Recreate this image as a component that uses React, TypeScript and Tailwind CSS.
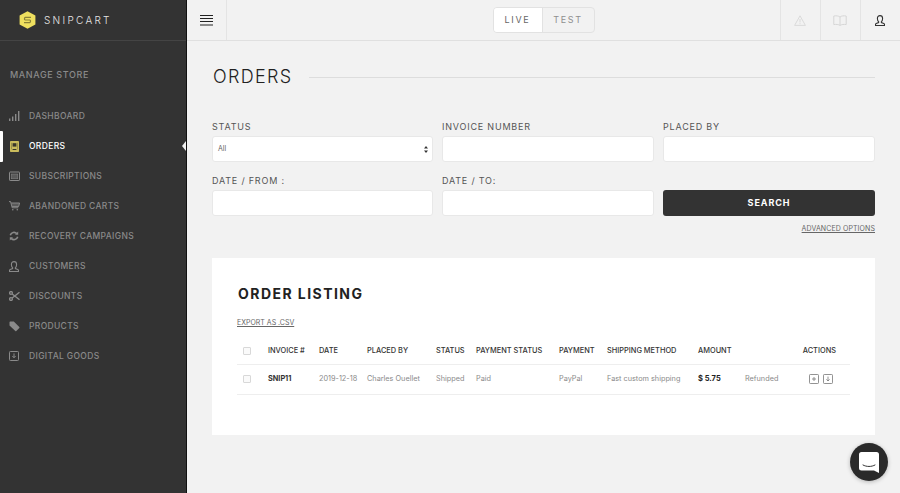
import React from "react";

const font = { fontFamily: '"Inter", "Liberation Sans", sans-serif' };

function Dash() {
  return (
    <svg width="11" height="10" viewBox="0 0 11 10" fill="currentColor">
      <rect x="0" y="7.5" width="1.4" height="2.5" />
      <rect x="3" y="5.5" width="1.4" height="4.5" />
      <rect x="6" y="3" width="1.4" height="7" />
      <rect x="9" y="0" width="1.4" height="10" />
    </svg>
  );
}
function OrdersIcon() {
  return (
    <svg width="9" height="11" viewBox="0 0 9 11" className="ml-[1px]">
      <rect x="0" y="0" width="9" height="11" rx="0.8" fill="#c9bb5c" />
      <path d="M1.5 1.8v6.5M7.5 1.8v6.5" stroke="#7e7740" strokeWidth="0.6" />
      <rect x="2.6" y="2.2" width="3.8" height="3.4" fill="#38362a" />
      <rect x="2.6" y="8" width="3.8" height="1" fill="#38362a" />
    </svg>
  );
}
function SubsIcon() {
  return (
    <svg width="11" height="10" viewBox="0 0 11 10" fill="none" stroke="currentColor">
      <rect x="0.5" y="1" width="10" height="8.5" rx="0.6" />
      <rect x="2.2" y="3" width="6.6" height="4.8" fill="currentColor" fillOpacity="0.45" strokeWidth="0.5" />
    </svg>
  );
}
function CartIcon() {
  return (
    <svg width="11" height="10" viewBox="0 0 11 10" fill="none" stroke="currentColor" strokeWidth="1">
      <path d="M0 0.6h1.6l1.6 6.2h6" />
      <path d="M2.2 2h8.4l-1 3.6H3.1" fill="currentColor" fillOpacity="0.45" />
      <circle cx="3.8" cy="8.8" r="0.8" fill="currentColor" stroke="none" />
      <circle cx="8.3" cy="8.8" r="0.8" fill="currentColor" stroke="none" />
    </svg>
  );
}
function RefreshIcon() {
  return (
    <svg width="10" height="10" viewBox="0 0 10 10" fill="none" stroke="currentColor" strokeWidth="1.6">
      <path d="M1.3 4.2A3.8 3.8 0 0 1 7.8 2.6" />
      <path d="M8.7 5.8A3.8 3.8 0 0 1 2.2 7.4" />
      <path d="M9.2 0.6v3.2H6z" fill="currentColor" stroke="none" />
      <path d="M0.8 9.4V6.2H4z" fill="currentColor" stroke="none" />
    </svg>
  );
}
function UserIcon({ w = 10, h = 11 }: { w?: number; h?: number }) {
  return (
    <svg width={w} height={h} viewBox="0 0 10 11" fill="none" stroke="currentColor" strokeWidth="1.1">
      <path d="M3.6 6.6C2.7 5.8 2.4 4.6 2.4 3.4 2.4 1.6 3.4 0.6 5 0.6s2.6 1 2.6 2.8c0 1.2-.3 2.4-1.2 3.2v1l2.4.9c.5.2.7.5.7 1v1H.5v-1c0-.5.2-.8.7-1l2.4-.9z" />
    </svg>
  );
}
function ScissorsIcon() {
  return (
    <svg width="11" height="10" viewBox="0 0 11 10" fill="none" stroke="currentColor" strokeWidth="1.4">
      <circle cx="2" cy="2" r="1.4" />
      <circle cx="2" cy="8" r="1.4" />
      <path d="M3.2 3 10.5 8.8M3.2 7 10.5 1.2" />
    </svg>
  );
}
function TagIcon() {
  return (
    <svg width="11" height="11" viewBox="0 0 11 11" fill="currentColor">
      <path d="M0.5 1.2c0-.4.3-.7.7-.7h3.6l5.5 5.5c.3.3.3.7 0 1l-3 3c-.3.3-.7.3-1 0L.5 4.6z" />
    </svg>
  );
}
function DownBoxIcon() {
  return (
    <svg width="10" height="10" viewBox="0 0 10 10" fill="none" stroke="currentColor" strokeWidth="1">
      <rect x="0.5" y="0.5" width="9" height="9" rx="0.8" />
      <path d="M5 2.4v4M3.4 5 5 6.8 6.6 5" />
    </svg>
  );
}

const nav: { label: string; icon: React.ReactNode; active?: boolean }[] = [
  { label: "DASHBOARD", icon: <Dash /> },
  { label: "ORDERS", icon: <OrdersIcon />, active: true },
  { label: "SUBSCRIPTIONS", icon: <SubsIcon /> },
  { label: "ABANDONED CARTS", icon: <CartIcon /> },
  { label: "RECOVERY CAMPAIGNS", icon: <RefreshIcon /> },
  { label: "CUSTOMERS", icon: <UserIcon /> },
  { label: "DISCOUNTS", icon: <ScissorsIcon /> },
  { label: "PRODUCTS", icon: <TagIcon /> },
  { label: "DIGITAL GOODS", icon: <DownBoxIcon /> },
];

function Sidebar() {
  return (
    <aside className="w-[187px] shrink-0 h-full bg-[#333333] border-r border-r-[#111111] flex flex-col">
      <div className="h-[41px] shrink-0 border-b border-b-[#444444] flex items-center pl-[19px]">
        <svg width="17" height="18" viewBox="0 0 17 18">
          <path d="M8.5 0.3 16.4 4.6v8.8L8.5 17.7.6 13.4V4.6z" fill="#efe05f" />
          <path d="M12 6.4H6.2c-.9 0-1.2 2.6 0 2.6h4.6c1.2 0 .9 2.6 0 2.6H5" fill="none" stroke="#8a8238" strokeWidth="1.1" />
        </svg>
        <span className="ml-[8px] text-[10px] font-light tracking-[2.3px] text-[#e6e6e6]">SNIPCART</span>
      </div>
      <div className="mt-[28px] pl-[10px] text-[9px] font-medium tracking-[0.62px] text-[#8a8a8a] leading-[12px]">MANAGE STORE</div>
      <nav className="mt-[20px] flex flex-col">
        {nav.map((n) => (
          <div key={n.label} className="relative h-[30px] flex items-center">
            {n.active && <span className="absolute left-0 top-0 w-[3px] h-[31px] bg-white rounded-r-[1px]" />}
            {n.active && (
              <span className="absolute right-0 top-[10px] w-0 h-0 border-y-[5px] border-y-transparent border-r-[4px] border-r-[#f2f2f2]" />
            )}
            <span className={`w-[29px] pl-[9px] flex items-center shrink-0 ${n.active ? "text-white" : "text-[#8a8a8a]"}`}>{n.icon}</span>
            <span className={`text-[8.5px] font-medium tracking-[0.34px] ${n.active ? "text-white" : "text-[#8a8a8a]"}`}>{n.label}</span>
          </div>
        ))}
      </nav>
    </aside>
  );
}

function Header() {
  return (
    <header className="h-[41px] shrink-0 border-b border-b-[#e0e0e0] flex items-stretch">
      <div className="w-[40px] border-r border-r-[#e4e4e4] flex items-center justify-center">
        <svg width="13" height="11" viewBox="0 0 13 11" stroke="#222222" strokeWidth="1">
          <path d="M0 .5h13M0 3.5h13M0 6.5h13M0 10h13" />
        </svg>
      </div>
      <div className="flex-1 flex items-center justify-center pb-[1px] pl-[80px]">
        <div className="flex w-[102px] h-[26px] rounded-[4px] border border-[#e2e2e2] overflow-hidden text-[9px] tracking-[1.7px]">
          <div className="w-[49px] bg-white flex items-center justify-center text-[#666666] border-r border-r-[#e2e2e2]">LIVE</div>
          <div className="flex-1 flex items-center justify-center text-[#8f8f8f]">TEST</div>
        </div>
      </div>
      <div className="w-[40px] border-l border-l-[#e4e4e4] flex items-center justify-center pr-[2px] text-[#dadada]">
        <svg width="12" height="11" viewBox="0 0 12 11" fill="none" stroke="currentColor" strokeWidth="1">
          <path d="M6 .8 11.4 10.4H.6z" />
          <path d="M6 4v3.4M6 8.2v1" />
        </svg>
      </div>
      <div className="w-[40px] border-l border-l-[#e4e4e4] flex items-center justify-center pr-[2px] text-[#d6d6d6]">
        <svg width="14" height="11" viewBox="0 0 14 11" fill="none" stroke="currentColor" strokeWidth="1">
          <path d="M7 2C5.5.8 3 .6.8 1v8.6C3 9.2 5.5 9.4 7 10.4c1.5-1 4-1.2 6.2-.8V1C11 .6 8.5.8 7 2zM7 2v8.4" />
        </svg>
      </div>
      <div className="w-[40px] border-l border-l-[#e4e4e4] flex items-center justify-center pr-[2px] text-[#333333]">
        <UserIcon w={10} h={11} />
      </div>
    </header>
  );
}

function Field({ label, children }: { label: string; children?: React.ReactNode }) {
  return (
    <div className="flex flex-col">
      <label className="h-[15px] text-[9px] leading-[12px] tracking-[0.8px] text-[#555555]">{label}</label>
      <div className="h-[26px] bg-white border border-[#e8e8e8] rounded-[3px] flex items-center px-[5px] justify-between">{children}</div>
    </div>
  );
}

const cols = "grid grid-cols-[31px_51px_48px_69px_40px_83px_48px_91px_47px_57px_1fr] items-center";

function CheckBox() {
  return <span className="block w-[8px] h-[8px] ml-[6px] border border-[#d8d8d8] rounded-[1px] bg-[#fafafa]" />;
}

function Table() {
  const head = ["INVOICE #", "DATE", "PLACED BY", "STATUS", "PAYMENT STATUS", "PAYMENT", "SHIPPING METHOD", "AMOUNT", ""];
  return (
    <div className="mt-[9px]">
      <div className={`${cols} h-[28px] border-b border-b-[#eeeeee] text-[7.4px] font-medium text-[#333333]`}>
        <CheckBox />
        {head.map((h, i) => (
          <span key={i} className="whitespace-nowrap">{h}</span>
        ))}
        <span className="text-right whitespace-nowrap pr-[14px]">ACTIONS</span>
      </div>
      <div className={`${cols} h-[30px] pb-[1px] border-b border-b-[#eeeeee] text-[7.3px] text-[#8a8a8a]`}>
        <CheckBox />
        <span className="font-bold text-[#333333] whitespace-nowrap">SNIP11</span>
        <span className="whitespace-nowrap">2019-12-18</span>
        <span className="whitespace-nowrap">Charles Ouellet</span>
        <span>Shipped</span>
        <span>Paid</span>
        <span>PayPal</span>
        <span className="whitespace-nowrap">Fast custom shipping</span>
        <span className="font-bold text-[#222222] text-[7.5px] whitespace-nowrap">$ 5.75</span>
        <span>Refunded</span>
        <span className="flex justify-end gap-[4px] pr-[17px] text-[#777777]">
          <svg width="10" height="10" viewBox="0 0 10 10" fill="none" stroke="currentColor" strokeWidth="0.8">
            <rect x="0.5" y="0.5" width="9" height="9" rx="0.8" />
            <path d="M5 3v4M3 5h4" />
          </svg>
          <svg width="10" height="10" viewBox="0 0 10 10" fill="none" stroke="currentColor" strokeWidth="0.8">
            <rect x="0.5" y="0.5" width="9" height="9" rx="0.8" />
            <path d="M5 2.6v4.4M3.4 5.4 5 7l1.6-1.6" />
          </svg>
        </span>
      </div>
    </div>
  );
}

export default function App() {
  return (
    <div className="h-screen w-full flex overflow-hidden bg-[#f2f2f2] opacity-[0.999]" style={font}>
      <Sidebar />
      <div className="flex-1 min-w-0 flex flex-col">
        <Header />
        <main className="flex-1 pl-[25px] pr-[25px]">
          <div className="mt-[25px] h-[22px] flex items-center">
            <h1 className="text-[18px] font-light tracking-[1.3px] pl-[1px] text-[#222222] leading-[22px]">ORDERS</h1>
            <div className="ml-[17px] flex-1 h-px bg-[#dddddd]" />
          </div>
          <div className="mt-[33px] grid grid-cols-[221px_212px_212px] gap-x-[9px] gap-y-[13px]">
            <Field label="STATUS">
              <span className="text-[7px] text-[#666666]">All</span>
              <svg width="4" height="7" viewBox="0 0 4 7" fill="#333333" className="mr-[-1px]">
                <path d="M2 0 4 2.6H0zM2 7 0 4.4H4z" />
              </svg>
            </Field>
            <Field label="INVOICE NUMBER" />
            <Field label="PLACED BY" />
            <Field label="DATE / FROM :" />
            <Field label="DATE / TO:" />
            <div className="pt-[15px]">
              <button className="block w-full h-[26px] bg-[#333333] rounded-[3px] text-white text-[9px] font-bold tracking-[0.9px]">SEARCH</button>
            </div>
          </div>
          <div className="mt-[4px] text-right leading-[10px]">
            <a className="text-[7px] text-[#666666] underline tracking-[0.1px]">ADVANCED OPTIONS</a>
          </div>
          <section className="mt-[24px] h-[177px] bg-white px-[25px] pt-[27px]">
            <h2 className="text-[14px] leading-[18px] font-bold tracking-[1.45px] pl-[1px] text-[#222222]">ORDER LISTING</h2>
            <a className="block mt-[15px] text-[7px] leading-[10px] text-[#666666] underline">EXPORT AS .CSV</a>
            <Table />
          </section>
        </main>
      </div>
      <button className="fixed right-[12px] bottom-[12px] w-[38px] h-[38px] rounded-full bg-[#2a2a2a] flex items-center justify-center shadow-[0_1px_4px_rgba(0,0,0,0.25)]">
        <svg width="20" height="21" viewBox="0 0 20 21">
          <path d="M2.5 0h15A2.5 2.5 0 0 1 20 2.5V21l-5-2.5H2.5A2.5 2.5 0 0 1 0 16V2.5A2.5 2.5 0 0 1 2.5 0z" fill="#ffffff" />
          <path d="M4 13c3.5 2 8.5 2 12 0" fill="none" stroke="#333333" strokeWidth="1" strokeLinecap="round" />
        </svg>
      </button>
    </div>
  );
}
